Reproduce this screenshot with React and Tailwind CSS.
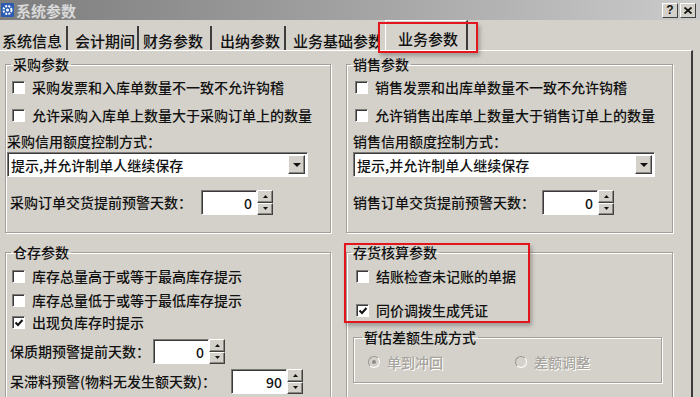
import React from "react";

const CheckBox = ({checked}) => (
	<span className="relative w-[13px] h-[13px] shrink-0 bg-white border border-t-[#7c7a76] border-l-[#7c7a76] border-b-white border-r-white shadow-[inset_1px_1px_0_#3a3a3a]">
		{checked && (
			<svg className="absolute left-[1px] top-[1px]" width="10" height="10" viewBox="0 0 10 10">
				<path d="M1.5 4.5 L4 7 L8.5 2" stroke="#111" strokeWidth="2" fill="none"/>
			</svg>
		)}
	</span>
)

const CheckRow = ({checked, label, className}) => (
	<div className={"flex items-center gap-[7px] h-[16px] leading-[16px] " + className}>
		<CheckBox checked={checked}/>
		<span>{label}</span>
	</div>
)

const Spin = ({value}) => (
	<div className="flex h-[25px]">
		<div className="w-[56px] h-full bg-white border border-t-[#7c7a76] border-l-[#7c7a76] border-b-white border-r-white shadow-[inset_1px_1px_0_#3a3a3a] flex items-center justify-end pr-[4px] leading-none">{value}</div>
		<div className="w-[16px] h-full flex flex-col">
			<div className="flex-1 flex items-center justify-center bg-[#d4d1ca] border border-t-white border-l-white border-b-[#404040] border-r-[#404040] shadow-[inset_-1px_-1px_0_#8a8780]">
				<svg width="5" height="3" viewBox="0 0 5 3"><path d="M2.5 0 L5 3 L0 3 Z" fill="#111"/></svg>
			</div>
			<div className="flex-1 flex items-center justify-center bg-[#d4d1ca] border border-t-white border-l-white border-b-[#404040] border-r-[#404040] shadow-[inset_-1px_-1px_0_#8a8780]">
				<svg width="5" height="3" viewBox="0 0 5 3"><path d="M0 0 L5 0 L2.5 3 Z" fill="#111"/></svg>
			</div>
		</div>
	</div>
)

const Dropdown = ({value, className}) => (
	<div className={"h-[25px] bg-white border border-t-[#7c7a76] border-l-[#7c7a76] border-b-white border-r-white shadow-[inset_1px_1px_0_#3a3a3a] flex items-center pl-[3px] leading-none " + className}>
		<span>{value}</span>
		<div className="ml-auto mr-[2px] w-[17px] h-[19px] flex items-center justify-center bg-[#d4d1ca] border border-t-white border-l-white border-b-[#404040] border-r-[#404040] shadow-[inset_-1px_-1px_0_#8a8780]">
			<svg width="8" height="4" viewBox="0 0 8 4"><path d="M0 0 L8 0 L4 4 Z" fill="#111"/></svg>
		</div>
	</div>
)

const Radio = ({checked, label}) => (
	<div className="flex items-center gap-[7px] h-[16px] leading-[16px]">
		<span className="w-[12px] h-[12px] rounded-full border border-t-[#9a9792] border-l-[#9a9792] border-b-white border-r-white bg-[#d4d1ca] flex items-center justify-center">
			{checked && <span className="w-[4px] h-[4px] rounded-full bg-[#8e8b86]"/>}
		</span>
		<span className="text-[#a6a39d] [text-shadow:1px_1px_0_#fff]">{label}</span>
	</div>
)

const Group = ({title, legendClass, className, children}) => (
	<fieldset className={"border border-[#a3a09a] shadow-[1px_1px_0_#fff,inset_1px_1px_0_#fff] p-0 m-0 min-w-0 " + className}>
		<legend className={"px-[2px] text-[14px] leading-[14px] " + legendClass}>{title}</legend>
		{children}
	</fieldset>
)

export default function App() {
	return (
		<div className="relative w-[700px] h-[397px] overflow-hidden bg-[#d4d1ca] text-[#111] text-[14px] font-medium font-['Noto_Sans_CJK_SC','Noto_Sans',sans-serif] flex flex-col">
			{/* title bar */}
			<div className="h-[20px] shrink-0 flex items-center bg-linear-to-r from-[#7d7d7d] via-[#a2a2a2] to-[#cbcbcb]">
				<svg className="ml-[1px]" width="13" height="14" viewBox="0 0 13 14">
					<rect x="0" y="0" width="13" height="14" rx="1" fill="#2b5cb0"/>
					<circle cx="6.5" cy="7" r="4" fill="none" stroke="#fff" strokeWidth="2" strokeDasharray="2 1.2"/>
					<circle cx="6.5" cy="7" r="1.5" fill="#fff"/>
				</svg>
				<span className="ml-[2px] text-[15px] leading-[17px] font-bold text-[#d9d9d9]">系统参数</span>
				<div className="ml-auto mr-[4px] flex gap-[2px]">
					<div className="w-[16px] h-[15px] flex items-center justify-center bg-[#d4d1ca] border border-t-white border-l-white border-b-[#404040] border-r-[#404040] text-[12px] font-bold leading-none font-['Liberation_Sans',sans-serif]">?</div>
					<div className="w-[16px] h-[15px] flex items-center justify-center bg-[#d4d1ca] border border-t-white border-l-white border-b-[#404040] border-r-[#404040]">
						<svg width="8" height="7" viewBox="0 0 8 7"><path d="M0.5 0.5 L7.5 6.5 M7.5 0.5 L0.5 6.5" stroke="#111" strokeWidth="1.8"/></svg>
					</div>
				</div>
			</div>

			{/* tabs */}
			<div className="h-[30px] shrink-0 flex items-end text-[15px] leading-[17px]">
				<div className="h-[24px] pt-[6px] pl-[2px] pr-[4px] border-r-2 border-r-[#3c3c3c]">系统信息</div>
				<div className="h-[24px] pt-[6px] pl-[7px] pr-[2px] border-r-2 border-r-[#3c3c3c]">会计期间</div>
				<div className="h-[24px] pt-[6px] pl-[4px] pr-[7px] border-r-2 border-r-[#3c3c3c]">财务参数</div>
				<div className="h-[24px] pt-[6px] pl-[8px] pr-[4px] border-r-2 border-r-[#3c3c3c]">出纳参数</div>
				<div className="h-[24px] pt-[6px] pl-[7px] w-[94px] overflow-hidden whitespace-nowrap">业务基础参数</div>
				<div className="ml-[5px] h-[30px] pt-[9px] pl-[12px] pr-[8px] border-l border-t border-l-white border-t-white border-r-2 border-r-[#3c3c3c] bg-[#d6d3cc]">业务参数</div>
			</div>

			{/* panel */}
			<div className="w-[693px] flex-1 border-t border-t-white border-r-2 border-r-[#3a3a3a] pt-[6px] pl-[5px] grid grid-cols-[326px_327px] gap-x-[15px] gap-y-[12px] content-start">
				<Group title="采购参数" legendClass="ml-[5px]" className="h-[176px]">
					<CheckRow className="ml-[6px] mt-[8px]" label="采购发票和入库单数量不一致不允许钩稽"/>
					<CheckRow className="ml-[6px] mt-[12px]" label="允许采购入库单上数量大于采购订单上的数量"/>
					<div className="ml-[1px] mt-[10px] h-[16px] leading-[16px]">采购信用额度控制方式：</div>
					<Dropdown className="ml-[1px] mt-[3px] w-[301px]" value="提示,并允许制单人继续保存"/>
					<div className="flex items-center mt-[13px] ml-[4px]">
						<span className="w-[191px]">采购订单交货提前预警天数：</span>
						<Spin value="0"/>
					</div>
				</Group>
				<Group title="销售参数" legendClass="ml-[4px]" className="h-[176px]">
					<CheckRow className="ml-[8px] mt-[8px]" label="销售发票和出库单数量不一致不允许钩稽"/>
					<CheckRow className="ml-[8px] mt-[12px]" label="允许销售出库单上数量大于销售订单上的数量"/>
					<div className="ml-[6px] mt-[10px] h-[16px] leading-[16px]">销售信用额度控制方式：</div>
					<Dropdown className="ml-[6px] mt-[3px] w-[302px]" value="提示,并允许制单人继续保存"/>
					<div className="flex items-center mt-[13px] ml-[6px]">
						<span className="w-[189px]">销售订单交货提前预警天数：</span>
						<Spin value="0"/>
					</div>
				</Group>
				<Group title="仓存参数" legendClass="ml-[5px]" className="h-[170px]">
					<CheckRow className="ml-[6px] mt-[9px]" label="库存总量高于或等于最高库存提示"/>
					<CheckRow className="ml-[6px] mt-[8px]" label="库存总量低于或等于最低库存提示"/>
					<CheckRow className="ml-[6px] mt-[6px]" checked label="出现负库存时提示"/>
					<div className="flex items-center mt-[9px] ml-[4px]">
						<span className="w-[143px]">保质期预警提前天数：</span>
						<Spin value="0"/>
					</div>
					<div className="flex items-center mt-[5px] ml-[4px]">
						<span className="w-[221px]">呆滞料预警(物料无发生额天数)：</span>
						<Spin value="90"/>
					</div>
				</Group>
				<Group title="存货核算参数" legendClass="ml-[4px]" className="h-[170px]">
					<CheckRow className="ml-[9px] mt-[9px]" label="结账检查未记账的单据"/>
					<CheckRow className="ml-[9px] mt-[18px]" checked label="同价调拨生成凭证"/>
					<fieldset className="ml-[6px] mr-[10px] mt-[12px] h-[53px] border border-[#a3a09a] shadow-[1px_1px_0_#fff,inset_1px_1px_0_#fff] p-0 min-w-0">
						<legend className="ml-[8px] px-[2px] text-[14px] leading-[14px]">暂估差额生成方式</legend>
						<div className="flex mt-[10px] ml-[14px]">
							<div className="w-[147px]"><Radio checked label="单到冲回"/></div>
							<Radio label="差额调整"/>
						</div>
					</fieldset>
				</Group>
			</div>

			{/* annotation boxes */}
			<div className="absolute left-[378px] top-[22px] w-[100px] h-[31px] border-2 border-[#e3161d] shadow-[2px_3px_4px_rgba(0,0,0,0.25)]"/>
			<div className="absolute left-[344px] top-[243px] w-[186px] h-[80px] border-2 border-[#e3161d] shadow-[2px_3px_4px_rgba(0,0,0,0.25)]"/>
		</div>
	)
}
